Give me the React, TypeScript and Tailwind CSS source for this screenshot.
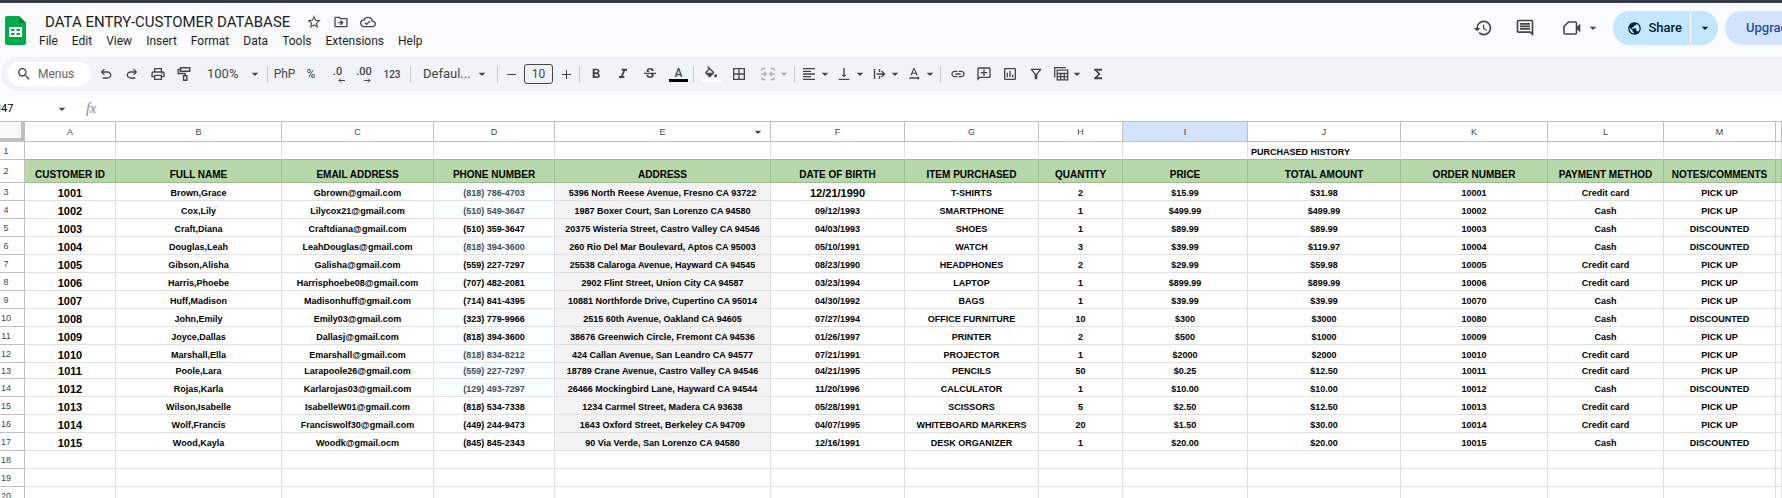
import type { ReactNode } from 'react'
import {
  MdArrowDropDown,
  MdBorderAll,
  MdFormatAlignLeft,
  MdFormatBold,
  MdFormatColorFill,
  MdFormatItalic,
  MdFunctions,
  MdHistory,
  MdLink,
  MdOutlineAddComment,
  MdOutlineCloudDone,
  MdOutlineDriveFileMove,
  MdOutlineFilterAlt,
  MdOutlineInsertChart,
  MdOutlineInsertComment,
  MdOutlinePrint,
  MdPublic,
  MdSearch,
  MdStarBorder,
  MdStrikethroughS,
  MdTextRotationNone,
  MdVerticalAlignBottom,
} from 'react-icons/md'

const menus = ['File', 'Edit', 'View', 'Insert', 'Format', 'Data', 'Tools', 'Extensions', 'Help']

const columns = [
  { letter: 'A', title: 'CUSTOMER ID', width: 'w-[91px]' },
  { letter: 'B', title: 'FULL NAME', width: 'w-[166px]' },
  { letter: 'C', title: 'EMAIL ADDRESS', width: 'w-[152px]' },
  { letter: 'D', title: 'PHONE NUMBER', width: 'w-[121px]' },
  { letter: 'E', title: 'ADDRESS', width: 'w-[216px]' },
  { letter: 'F', title: 'DATE OF BIRTH', width: 'w-[134px]' },
  { letter: 'G', title: 'ITEM PURCHASED', width: 'w-[134px]' },
  { letter: 'H', title: 'QUANTITY', width: 'w-[84px]' },
  { letter: 'I', title: 'PRICE', width: 'w-[125px]' },
  { letter: 'J', title: 'TOTAL AMOUNT', width: 'w-[153px]' },
  { letter: 'K', title: 'ORDER NUMBER', width: 'w-[147px]' },
  { letter: 'L', title: 'PAYMENT METHOD', width: 'w-[116px]' },
  { letter: 'M', title: 'NOTES/COMMENTS', width: 'w-[112px]' },
  { letter: '', title: '', width: '' },
]

const customers = [
  ['1001', 'Brown,Grace', 'Gbrown@gmail.com', '(818) 786-4703', '5396 North Reese Avenue, Fresno CA 93722', '12/21/1990', 'T-SHIRTS', '2', '$15.99', '$31.98', '10001', 'Credit card', 'PICK UP', ''],
  ['1002', 'Cox,Lily', 'Lilycox21@gmail.com', '(510) 549-3647', '1987 Boxer Court, San Lorenzo CA 94580', '09/12/1993', 'SMARTPHONE', '1', '$499.99', '$499.99', '10002', 'Cash', 'PICK UP', ''],
  ['1003', 'Craft,Diana', 'Craftdiana@gmail.com', '(510) 359-3647', '20375 Wisteria Street, Castro Valley CA 94546', '04/03/1993', 'SHOES', '1', '$89.99', '$89.99', '10003', 'Cash', 'DISCOUNTED', ''],
  ['1004', 'Douglas,Leah', 'LeahDouglas@gmail.com', '(818) 394-3600', '260 Rio Del Mar Boulevard, Aptos CA 95003', '05/10/1991', 'WATCH', '3', '$39.99', '$119.97', '10004', 'Cash', 'DISCOUNTED', ''],
  ['1005', 'Gibson,Alisha', 'Galisha@gmail.com', '(559) 227-7297', '25538 Calaroga Avenue, Hayward CA 94545', '08/23/1990', 'HEADPHONES', '2', '$29.99', '$59.98', '10005', 'Credit card', 'PICK UP', ''],
  ['1006', 'Harris,Phoebe', 'Harrisphoebe08@gmail.com', '(707) 482-2081', '2902 Flint Street, Union City CA 94587', '03/23/1994', 'LAPTOP', '1', '$899.99', '$899.99', '10006', 'Credit card', 'PICK UP', ''],
  ['1007', 'Huff,Madison', 'Madisonhuff@gmail.com', '(714) 841-4395', '10881 Northforde Drive, Cupertino CA 95014', '04/30/1992', 'BAGS', '1', '$39.99', '$39.99', '10070', 'Cash', 'PICK UP', ''],
  ['1008', 'John,Emily', 'Emily03@gmail.com', '(323) 779-9966', '2515 60th Avenue, Oakland CA 94605', '07/27/1994', 'OFFICE FURNITURE', '10', '$300', '$3000', '10080', 'Cash', 'DISCOUNTED', ''],
  ['1009', 'Joyce,Dallas', 'Dallasj@gmail.com', '(818) 394-3600', '38676 Greenwich Circle, Fremont CA 94536', '01/26/1997', 'PRINTER', '2', '$500', '$1000', '10009', 'Cash', 'PICK UP', ''],
  ['1010', 'Marshall,Ella', 'Emarshall@gmail.com', '(818) 834-8212', '424 Callan Avenue, San Leandro CA 94577', '07/21/1991', 'PROJECTOR', '1', '$2000', '$2000', '10010', 'Credit card', 'PICK UP', ''],
  ['1011', 'Poole,Lara', 'Larapoole26@gmail.com', '(559) 227-7297', '18789 Crane Avenue, Castro Valley CA 94546', '04/21/1995', 'PENCILS', '50', '$0.25', '$12.50', '10011', 'Credit card', 'PICK UP', ''],
  ['1012', 'Rojas,Karla', 'Karlarojas03@gmail.com', '(129) 493-7297', '26466 Mockingbird Lane, Hayward CA 94544', '11/20/1996', 'CALCULATOR', '1', '$10.00', '$10.00', '10012', 'Cash', 'DISCOUNTED', ''],
  ['1013', 'Wilson,Isabelle', 'IsabelleW01@gmail.com', '(818) 534-7338', '1234 Carmel Street, Madera CA 93638', '05/28/1991', 'SCISSORS', '5', '$2.50', '$12.50', '10013', 'Credit card', 'PICK UP', ''],
  ['1014', 'Wolf,Francis', 'Franciswolf30@gmail.com', '(449) 244-9473', '1643 Oxford Street, Berkeley CA 94709', '04/07/1995', 'WHITEBOARD MARKERS', '20', '$1.50', '$30.00', '10014', 'Credit card', 'PICK UP', ''],
  ['1015', 'Wood,Kayla', 'Woodk@gmail.ocm', '(845) 845-2343', '90 Via Verde, San Lorenzo CA 94580', '12/16/1991', 'DESK ORGANIZER', '1', '$20.00', '$20.00', '10015', 'Cash', 'DISCOUNTED', ''],
]

const softPhones = ['1001', '1002', '1004', '1010', '1011', '1012']
const tintedPhones = ['1001', '1002', '1004', '1006', '1008', '1009', '1010', '1011', '1012']

function SheetsLogo() {
  return (
    <svg viewBox="0 0 21 29" className="h-[29px] w-[21px]" aria-hidden="true">
      <path d="M2 0h12l7 7v20a2 2 0 0 1-2 2H2a2 2 0 0 1-2-2V2a2 2 0 0 1 2-2Z" fill="#00ac47" />
      <path d="M14 0l7 7h-7Z" fill="#00832d" />
      <path d="M4 11h13v10H4Zm2 2v2h3.500v-2Zm5.500 0v2H15v-2ZM6 17v2h3.500v-2Zm5.500 0v2H15v-2Z" fill="#fff" fillRule="evenodd" />
    </svg>
  )
}

function UndoIcon({ className }: { className?: string }) {
  return (
    <svg viewBox="0 -960 960 960" fill="currentColor" className={`size-4 ${className ?? ''}`}>
      <path d="M280-200v-80h284q63 0 109.500-40T720-420q0-60-46.500-100T564-560H312l104 104-56 56-200-200 200-200 56 56-104 104h252q97 0 167 63t70 157q0 94-70 157t-167 63H280Z" />
    </svg>
  )
}

function PaintIcon() {
  return (
    <svg viewBox="0 0 16 16" fill="none" stroke="currentColor" strokeWidth="1.4" className="size-4">
      <path d="M4.500 1.700h9.300v3.600H4.500ZM4.500 3.500H2.200v4h7v2.300M7.500 9.800h3.400v4.500H7.500Z" />
    </svg>
  )
}

function MergeIcon() {
  return (
    <svg viewBox="0 0 16 16" fill="none" stroke="currentColor" strokeWidth="1.3" className="size-4">
      <path d="M5.500 2.500H2V5M10.500 2.500H14V5M5.500 13.500H2V11M10.500 13.500H14V11M1 8h5M4.200 6l2 2-2 2M15 8h-5M11.800 6l-2 2 2 2" />
    </svg>
  )
}

function OverflowIcon() {
  return (
    <svg viewBox="0 0 16 16" fill="none" stroke="currentColor" strokeWidth="1.4" className="size-4">
      <path d="M3.500 3v10M8.500 3v3M8.500 10v3M5.500 8h8M10.500 5l3 3-3 3" />
    </svg>
  )
}

function TableViewsIcon() {
  return (
    <svg viewBox="0 0 16 16" fill="none" stroke="currentColor" strokeWidth="1.3" className="size-4">
      <path d="M1.700 11.500V1.700h11" />
      <path d="M4.200 4.200h10.600v9.600H4.200ZM4.200 7.500h10.600M4.200 10.600h10.600M7.700 7.500v6.300M11.300 7.500v6.300" />
    </svg>
  )
}

function MeetIcon() {
  return (
    <svg viewBox="0 0 18 16" className="h-4 w-[18px]" aria-hidden="true">
      <path d="M5.500 2h6.700c.8 0 1.300.5 1.300 1.300v9.400c0 .8-.5 1.300-1.300 1.300H2.300C1.500 14 1 13.500 1 12.700V6.500Z" fill="none" stroke="currentColor" strokeWidth="1.600" strokeLinejoin="round" />
      <path d="M13.500 7 17.300 3.800v8.400L13.500 9Z" fill="currentColor" />
    </svg>
  )
}

function ToolButton({ label, children }: { label: string; children: ReactNode }) {
  return (
    <button type="button" aria-label={label} className="flex h-6 w-[26px] shrink-0 items-center justify-center">
      {children}
    </button>
  )
}

function CaretButton({ label, children }: { label: string; children: ReactNode }) {
  return (
    <button type="button" aria-label={label} className="flex h-6 shrink-0 items-center pl-1">
      {children}
      <MdArrowDropDown className="-mr-1 size-4" />
    </button>
  )
}

function Divider() {
  return <span className="h-4 w-px shrink-0 bg-[#c7c9cc]" />
}

function Header() {
  return (
    <header className="flex items-start border-t-3 border-[#363b4a] pb-2">
      <div className="pt-[13px] pl-[5px]">
        <SheetsLogo />
      </div>
      <div className="pl-[6px]">
        <div className="flex items-center gap-3 pt-2 pl-[13px]">
          <h1 className="text-[15px] leading-[22px] text-[#1f1f1f]">DATA ENTRY-CUSTOMER DATABASE</h1>
          <div className="flex items-center gap-[11px] pl-1 text-[#444746]">
            <button type="button" aria-label="Star"><MdStarBorder className="size-4" /></button>
            <button type="button" aria-label="Move"><MdOutlineDriveFileMove className="size-4" /></button>
            <button type="button" aria-label="Saved to Drive"><MdOutlineCloudDone className="size-4" /></button>
          </div>
        </div>
        <nav className="flex">
          {menus.map((menu) => (
            <button key={menu} type="button" className="px-[7px] text-[12px] leading-4 text-[#1f1f1f]">
              {menu}
            </button>
          ))}
        </nav>
      </div>
      <div className="-mr-11 ml-auto flex shrink-0 items-center pt-2 text-[#444746]">
        <button type="button" aria-label="Version history"><MdHistory className="size-5" /></button>
        <button type="button" aria-label="Comments" className="ml-[22px]"><MdOutlineInsertComment className="size-5" /></button>
        <button type="button" aria-label="Meet" className="ml-7 flex items-center gap-1">
          <MeetIcon />
          <MdArrowDropDown className="size-4" />
        </button>
        <div className="ml-3 flex h-[34px] overflow-hidden rounded-full bg-[#c2e7ff] text-[#001d35]">
          <button type="button" className="flex items-center gap-[6px] pr-2 pl-[14px] text-[13px] font-medium">
            <MdPublic className="size-[15px]" />
            Share
          </button>
          <button type="button" aria-label="Sharing options" className="flex w-7 items-center justify-center border-l border-white">
            <MdArrowDropDown className="size-4" />
          </button>
        </div>
        <button type="button" className="ml-[7px] h-[34px] w-[101px] rounded-full bg-[#d3e3fd] pl-[21px] text-left text-[13px] font-medium text-[#1f4fa8]">
          Upgrade
        </button>
      </div>
    </header>
  )
}

function Toolbar() {
  return (
    <div className="ml-px flex h-[34px] items-center overflow-hidden rounded-l-full bg-[#f0f4f9] pl-[7px] text-[#444746]">
      <label className="mr-[2px] flex h-6 w-[83px] shrink-0 items-center gap-[6px] rounded-full bg-white pl-2">
        <MdSearch className="size-4 shrink-0" />
        <input type="text" placeholder="Menus" aria-label="Menus" className="w-12 text-[12px] outline-none placeholder:text-[#5f6368]" />
      </label>
      <ToolButton label="Undo"><UndoIcon /></ToolButton>
      <ToolButton label="Redo"><UndoIcon className="-scale-x-100" /></ToolButton>
      <ToolButton label="Print"><MdOutlinePrint className="size-4" /></ToolButton>
      <ToolButton label="Paint format"><PaintIcon /></ToolButton>
      <div className="flex shrink-0 items-center pr-1 pl-[10px]">
        <select aria-label="Zoom" className="w-10 appearance-none text-[13px]">
          <option>100%</option>
        </select>
        <MdArrowDropDown className="pointer-events-none size-4" />
      </div>
      <Divider />
      <button type="button" className="w-[33px] shrink-0 text-[12px]">PhP</button>
      <button type="button" className="w-5 shrink-0 text-[12px]">%</button>
      <button type="button" aria-label="Decrease decimal places" className="relative h-6 w-[33px] shrink-0 pb-1 text-[11px] font-medium">
        .0
        <svg viewBox="0 0 7 5" className="absolute top-4 left-[17px] h-[5px] w-[7px]" fill="none" stroke="currentColor"><path d="M7 2.500H1M3 .5l-2 2 2 2" /></svg>
      </button>
      <button type="button" aria-label="Increase decimal places" className="relative h-6 w-5 shrink-0 pb-1 text-[11px] font-medium">
        .00
        <svg viewBox="0 0 7 5" className="absolute top-4 left-[10px] h-[5px] w-[7px]" fill="none" stroke="currentColor"><path d="M0 2.500h6M4 .5l2 2-2 2" /></svg>
      </button>
      <button type="button" className="w-9 shrink-0 text-[10px] font-medium">123</button>
      <Divider />
      <div className="flex shrink-0 items-center pr-[7px] pl-3">
        <select aria-label="Font" className="w-[51px] appearance-none text-[13px]">
          <option>Defaul...</option>
        </select>
        <MdArrowDropDown className="pointer-events-none size-4" />
      </div>
      <Divider />
      <button type="button" aria-label="Decrease font size" className="flex h-6 w-[26px] shrink-0 items-center justify-center">
        <span className="h-px w-[9px] bg-[#444746]" />
      </button>
      <input type="text" aria-label="Font size" defaultValue="10" className="h-5 w-[29px] shrink-0 rounded-[3px] border border-[#444746] text-center text-[12px]" />
      <button type="button" aria-label="Increase font size" className="relative flex h-6 w-[26px] shrink-0 items-center justify-center">
        <span className="h-px w-[9px] bg-[#444746]" />
        <span className="absolute h-[9px] w-px bg-[#444746]" />
      </button>
      <Divider />
      <div className="flex shrink-0 gap-px pl-[3px]">
        <ToolButton label="Bold"><MdFormatBold className="size-4" /></ToolButton>
        <ToolButton label="Italic"><MdFormatItalic className="size-4" /></ToolButton>
        <ToolButton label="Strikethrough"><MdStrikethroughS className="size-4" /></ToolButton>
        <button type="button" aria-label="Text color" className="flex h-6 w-[29px] flex-col items-center justify-center">
          <span className="text-[12px] leading-3 font-medium">A</span>
          <span className="h-[3px] w-[19px] bg-black" />
        </button>
      </div>
      <Divider />
      <div className="flex shrink-0 gap-[2px] pl-1">
        <button type="button" aria-label="Fill color" className="flex h-6 w-[26px] flex-col items-center justify-center">
          <MdFormatColorFill className="size-4 -mb-[3px]" />
          <span className="h-[3px] w-[19px] bg-white" />
        </button>
        <ToolButton label="Borders"><MdBorderAll className="size-4" /></ToolButton>
      </div>
      <div className="flex shrink-0 pr-[6px] pl-1 text-[#b0b3b6]">
        <CaretButton label="Merge cells"><MergeIcon /></CaretButton>
      </div>
      <Divider />
      <div className="flex shrink-0 gap-[3px] pr-[6px] pl-[2px]">
        <CaretButton label="Horizontal align"><MdFormatAlignLeft className="size-4" /></CaretButton>
        <CaretButton label="Vertical align"><MdVerticalAlignBottom className="size-4" /></CaretButton>
        <CaretButton label="Text wrapping"><OverflowIcon /></CaretButton>
        <CaretButton label="Text rotation"><MdTextRotationNone className="size-4" /></CaretButton>
      </div>
      <Divider />
      <div className="flex shrink-0 pl-1">
        <ToolButton label="Insert link"><MdLink className="size-4" /></ToolButton>
        <ToolButton label="Insert comment"><MdOutlineAddComment className="size-4 -scale-x-100" /></ToolButton>
        <ToolButton label="Insert chart"><MdOutlineInsertChart className="size-4" /></ToolButton>
        <ToolButton label="Create a filter"><MdOutlineFilterAlt className="size-4" /></ToolButton>
        <div className="flex pr-1">
          <CaretButton label="Filter views"><TableViewsIcon /></CaretButton>
        </div>
        <ToolButton label="Functions"><MdFunctions className="size-4" /></ToolButton>
      </div>
    </div>
  )
}

function FormulaBar() {
  return (
    <div className="mt-[6px] flex h-6 items-center bg-white text-[#444746]">
      <div className="flex w-[54px] justify-start overflow-hidden">
        <input type="text" aria-label="Name box" defaultValue="I47" className="-ml-[2px] w-14 text-[11px] text-black outline-none" />
      </div>
      <MdArrowDropDown className="size-4" />
      <label htmlFor="formula" className="ml-4 font-['Liberation_Serif',serif] text-[14px] leading-4 text-[#80868b] italic">fx</label>
      <input id="formula" type="text" className="ml-2 flex-1 outline-none" />
    </div>
  )
}

function RowNumber({ value }: { value: number }) {
  return (
    <th scope="row" className="border-r border-b border-[#c0c0c0] text-[9px] leading-3 font-normal text-[#444746]">
      <span className="block w-3 text-center">{value}</span>
    </th>
  )
}

function cellStyle(col: number, row: string[]) {
  if (col === 0) return 'text-[11px] text-black'
  if (col === 3) {
    const color = softPhones.includes(row[0]) ? 'text-[#434e5c]' : 'text-black'
    const fill = tintedPhones.includes(row[0]) ? 'bg-[#f8fdff]' : ''
    return `text-[9px] ${color} ${fill}`
  }
  if (col === 4) return 'bg-[#f3f3f3] text-[9px] text-black'
  if (col === 5 && row[0] === '1001') return 'text-[11px] text-black'
  return 'text-[9px] text-black'
}

function Sheet() {
  return (
    <table className="w-full table-fixed border-separate border-spacing-0 border-t border-[#c0c0c0] bg-white font-['Liberation_Sans',Arial,sans-serif]">
      <colgroup>
        <col className="w-[25px]" />
        {columns.map((column) => (
          <col key={column.letter} className={column.width} />
        ))}
      </colgroup>
      <thead>
        <tr className="h-5">
          <td className="border-r-4 border-b-4 border-[#c0c0c0] bg-[#f8f9fa]" />
          {columns.map((column) => (
            <th
              key={column.letter}
              scope="col"
              className={`relative border-r border-b border-[#c0c0c0] text-[9px] leading-3 font-normal ${column.letter === 'I' ? 'bg-[#d3e3fd] text-[#1f1f1f]' : 'text-[#444746]'}`}
            >
              {column.letter}
              {column.letter === 'E' && <MdArrowDropDown className="absolute top-[2px] right-1 size-4" />}
            </th>
          ))}
        </tr>
      </thead>
      <tbody>
        <tr className="h-[18px]">
          <RowNumber value={1} />
          {columns.map((column) => (
            <td key={column.letter} className="border-r border-b border-r-[#e1e1e1] border-b-[#9fbb94] pl-[3px] align-bottom text-[9px] leading-[14px] font-bold whitespace-nowrap text-black">
              {column.letter === 'J' && 'PURCHASED HISTORY'}
            </td>
          ))}
        </tr>
        <tr className="h-[23px]">
          <RowNumber value={2} />
          {columns.map((column) => (
            <td key={column.letter} className="border-r border-b border-[#9fbb94] bg-[#b6d7a8] text-center align-bottom text-[10px] leading-[14px] font-bold whitespace-nowrap text-black">
              {column.title}
            </td>
          ))}
        </tr>
        {customers.map((row, i) => (
          <tr key={row[0]} className={i === 10 ? 'h-4' : 'h-[18px]'}>
            <RowNumber value={i + 3} />
            {row.map((value, col) => (
              <td key={col} className={`border-r border-b border-[#e1e1e1] text-center align-bottom leading-[14px] font-bold whitespace-nowrap ${cellStyle(col, row)}`}>
                {value}
              </td>
            ))}
          </tr>
        ))}
        {[18, 19, 20].map((n) => (
          <tr key={n} className="h-[18px]">
            <RowNumber value={n} />
            {columns.map((column) => (
              <td key={column.letter} className="border-r border-b border-[#e1e1e1]" />
            ))}
          </tr>
        ))}
      </tbody>
    </table>
  )
}

export default function App() {
  return (
    <div className="h-screen overflow-hidden bg-[#f9fbfd] font-[Roboto,sans-serif]">
      <Header />
      <Toolbar />
      <FormulaBar />
      <Sheet />
    </div>
  )
}
